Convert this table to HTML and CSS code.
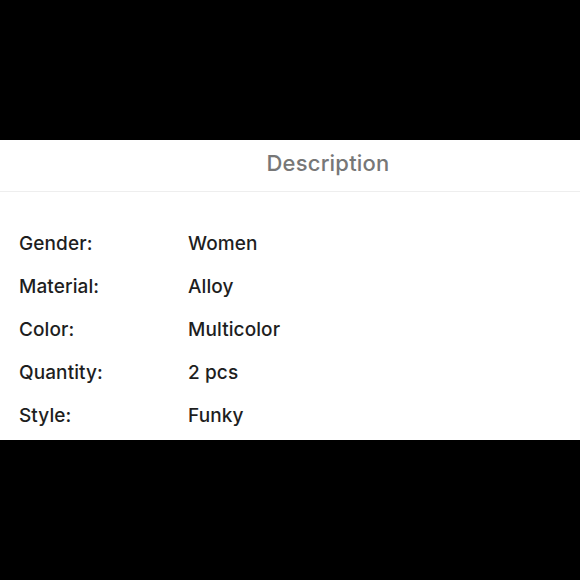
FILE: index.html
```html
<!DOCTYPE html>
<html>
<head>
<meta charset="utf-8">
<link rel="stylesheet" href="styles.css">
</head>
<body>
<div class="top"></div>
<section class="card">
  <header class="title">Description</header>
  <div class="rows">
    <div class="row"><span class="label">Gender:</span><span class="value">Women</span></div>
    <div class="row"><span class="label">Material:</span><span class="value">Alloy</span></div>
    <div class="row"><span class="label">Color:</span><span class="value">Multicolor</span></div>
    <div class="row"><span class="label">Quantity:</span><span class="value">2 pcs</span></div>
    <div class="row"><span class="label">Style:</span><span class="value">Funky</span></div>
  </div>
</section>
<div class="bottom"></div>
</body>
</html>
```
FILE: styles.css
```css
html, body {
  margin: 0;
  padding: 0;
  background: #000;
  width: 580px;
  height: 580px;
  overflow: hidden;
  font-family: Inter, "Noto Sans", sans-serif;
}
.top {
  height: 140px;
}
.card {
  background: #fff;
  height: 300px;
  display: flex;
  flex-direction: column;
}
.title {
  height: 52px;
  border-bottom: 1px solid #eeeeee;
  box-sizing: border-box;
  display: flex;
  align-items: center;
  justify-content: center;
  padding-left: 76px;
  padding-bottom: 6px;
  font-size: 22px;
  font-weight: 500;
  color: #777777;
  letter-spacing: 0.2px;
}
.rows {
  padding-top: 30px;
  display: flex;
  flex-direction: column;
}
.row {
  display: flex;
  height: 43px;
  align-items: center;
  font-size: 19px;
  font-weight: 500;
  color: #1e1e1e;
  letter-spacing: 0.1px;
}
.label {
  width: 169px;
  padding-left: 19px;
}
.value {
  flex: 1;
}
```
